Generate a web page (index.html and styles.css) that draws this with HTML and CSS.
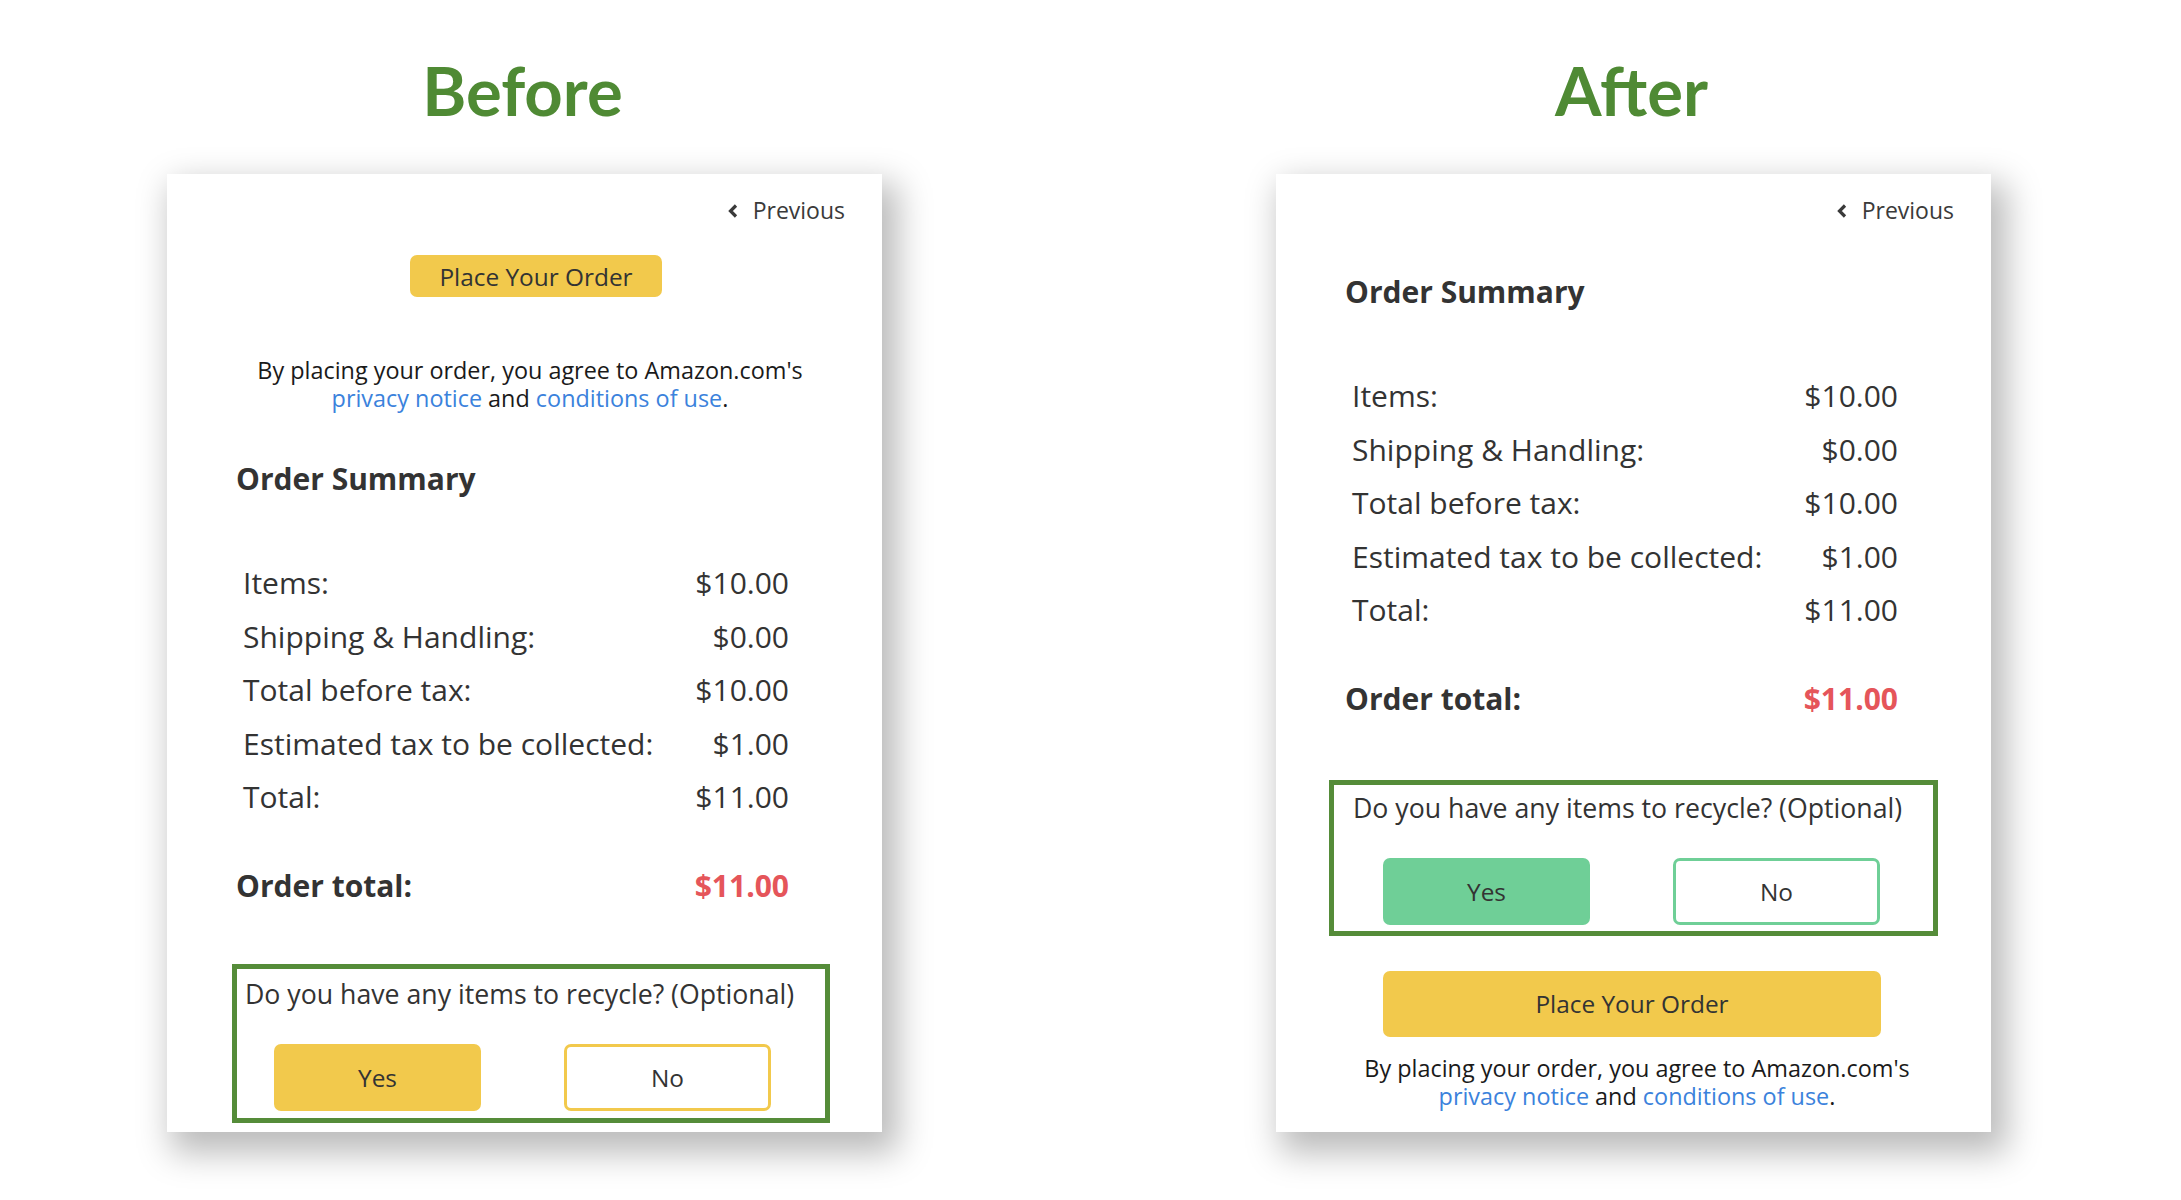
FILE: index.html
```html
<!DOCTYPE html>
<html lang="en">
<head>
<meta charset="utf-8">
<title>Before / After – Order Summary</title>
<link rel="stylesheet" href="styles.css">
</head>
<body>
<main class="page">
  <section class="column">
    <h1 class="title">Before</h1>
    <div class="card">
      <div class="prev">
        <svg class="chev" width="12" height="14" viewBox="0 0 12 14"><path d="M9 1.5 L3.5 7 L9 12.5" fill="none" stroke="#3a3a3a" stroke-width="3.2"/></svg>
        <span>Previous</span>
      </div>
      <div class="cta-small-wrap"><button class="place place-small">Place Your Order</button></div>
      <p class="agree agree-before">By placing your order, you agree to Amazon.com's<br><a class="link" href="#">privacy notice</a> and <a class="link" href="#">conditions of use</a>.</p>
      <h2 class="summary-title">Order Summary</h2>
      <div class="rows">
        <span class="lbl">Items:</span><span class="val">$10.00</span>
        <span class="lbl">Shipping &amp; Handling:</span><span class="val">$0.00</span>
        <span class="lbl">Total before tax:</span><span class="val">$10.00</span>
        <span class="lbl">Estimated tax to be collected:</span><span class="val">$1.00</span>
        <span class="lbl">Total:</span><span class="val">$11.00</span>
      </div>
      <div class="order-total"><span>Order total:</span><span class="red">$11.00</span></div>
      <div class="recycle recycle-before">
        <p class="q">Do you have any items to recycle? (Optional)</p>
        <div class="choices">
          <button class="choice yes-yellow">Yes</button>
          <button class="choice no-yellow">No</button>
        </div>
      </div>
    </div>
  </section>

  <section class="column">
    <h1 class="title">After</h1>
    <div class="card">
      <div class="prev">
        <svg class="chev" width="12" height="14" viewBox="0 0 12 14"><path d="M9 1.5 L3.5 7 L9 12.5" fill="none" stroke="#3a3a3a" stroke-width="3.2"/></svg>
        <span>Previous</span>
      </div>
      <h2 class="summary-title">Order Summary</h2>
      <div class="rows">
        <span class="lbl">Items:</span><span class="val">$10.00</span>
        <span class="lbl">Shipping &amp; Handling:</span><span class="val">$0.00</span>
        <span class="lbl">Total before tax:</span><span class="val">$10.00</span>
        <span class="lbl">Estimated tax to be collected:</span><span class="val">$1.00</span>
        <span class="lbl">Total:</span><span class="val">$11.00</span>
      </div>
      <div class="order-total"><span>Order total:</span><span class="red">$11.00</span></div>
      <div class="recycle recycle-after">
        <p class="q">Do you have any items to recycle? (Optional)</p>
        <div class="choices">
          <button class="choice yes-green">Yes</button>
          <button class="choice no-green">No</button>
        </div>
      </div>
      <button class="place place-big">Place Your Order</button>
      <p class="agree agree-after">By placing your order, you agree to Amazon.com's<br><a class="link" href="#">privacy notice</a> and <a class="link" href="#">conditions of use</a>.</p>
    </div>
  </section>
</main>
</body>
</html>
```

FILE: styles.css
```css
* { box-sizing: border-box; }

html, body {
  margin: 0;
  padding: 0;
  background: #ffffff;
}

body {
  font-family: "Open Sans", "Liberation Sans", sans-serif;
  color: #333333;
  width: 2181px;
  height: 1200px;
  overflow: hidden;
}

.page {
  display: grid;
  grid-template-columns: 715px 715px;
  column-gap: 394px;
  padding-left: 167px;
}

.column {
  display: flex;
  flex-direction: column;
}

.title {
  margin: 0;
  padding-top: 50px;
  height: 174px;
  font-family: Lato, "Open Sans", sans-serif;
  font-weight: 700;
  font-size: 67px;
  line-height: 80px;
  text-align: center;
  color: #4f8a34;
  letter-spacing: 0;
  padding-right: 4px;
}

.card {
  background: #ffffff;
  height: 958px;
  padding-top: 21px;
  box-shadow: 10px 15px 32px 6px rgba(0, 0, 0, 0.27);
  display: flex;
  flex-direction: column;
}

/* previous link */
.prev {
  display: flex;
  justify-content: flex-end;
  align-items: center;
  gap: 14px;
  padding-right: 37px;
  height: 30px;
  font-size: 23px;
  line-height: 30px;
  color: #3a3a3a;
}
.chev { display: block; margin-top: 2px; }

/* place order buttons */
.place {
  font-family: "Open Sans", "Liberation Sans", sans-serif;
  font-size: 24.4px;
  color: #333333;
  background: #f2c94c;
  border: none;
  border-radius: 7px;
  padding: 0;
  cursor: pointer;
}
.cta-small-wrap {
  display: flex;
  justify-content: center;
  padding-left: 23px;
  margin-top: 30px;
}
.place-small {
  width: 252px;
  height: 42px;
}
.place-big {
  margin-top: 35px;
  margin-left: 107px;
  width: 498px;
  height: 66px;
}

/* agreement text */
.agree {
  margin: 0;
  font-size: 23.4px;
  line-height: 28px;
  text-align: center;
  color: #1a1a1a;
}
.agree-before { margin-top: 59px; padding-left: 11px; }
.agree-after { margin-top: 17px; padding-left: 7px; }
.link { color: #3b82dc; text-decoration: none; }

/* summary */
.summary-title {
  margin: 47px 0 0 69px;
  font-size: 30px;
  line-height: 40px;
  font-weight: 700;
  color: #333333;
}

.rows {
  margin: 57px 0 0 76px;
  width: 546px;
  display: grid;
  grid-template-columns: 1fr auto;
  grid-auto-rows: 53.5px;
  align-items: center;
  font-size: 30px;
  color: #333333;
}
.val { text-align: right; }

.order-total {
  margin: 42px 0 0 69px;
  width: 553px;
  display: flex;
  justify-content: space-between;
  font-size: 30px;
  line-height: 40px;
  font-weight: 700;
  color: #333333;
}
.red { color: #e5555a; }

/* recycle question */
.recycle {
  border: 5px solid #558c39;
}
.recycle-before {
  margin: 58px 0 0 65px;
  width: 598px;
  padding: 5px 0 7px 8px;
}
.recycle-after {
  margin: 61px 0 0 53px;
  width: 609px;
  padding: 3px 0 6px 19px;
}
.q {
  margin: 0;
  font-size: 26.7px;
  line-height: 40px;
  color: #333333;
}
.choices {
  display: flex;
  gap: 83px;
  margin-top: 30px;
}
.recycle-before .choices { padding-left: 29px; }
.recycle-after .choices { padding-left: 30px; }

.choice {
  width: 207px;
  height: 67px;
  border-radius: 7px;
  font-family: "Open Sans", "Liberation Sans", sans-serif;
  font-size: 24.4px;
  color: #333333;
  padding: 0;
  cursor: pointer;
}
.yes-yellow { background: #f2c94c; border: none; }
.no-yellow { background: #ffffff; border: 3px solid #f2c94c; }
.yes-green { background: #6fcf97; border: none; }
.no-green { background: #ffffff; border: 3px solid #6fcf97; }
```
